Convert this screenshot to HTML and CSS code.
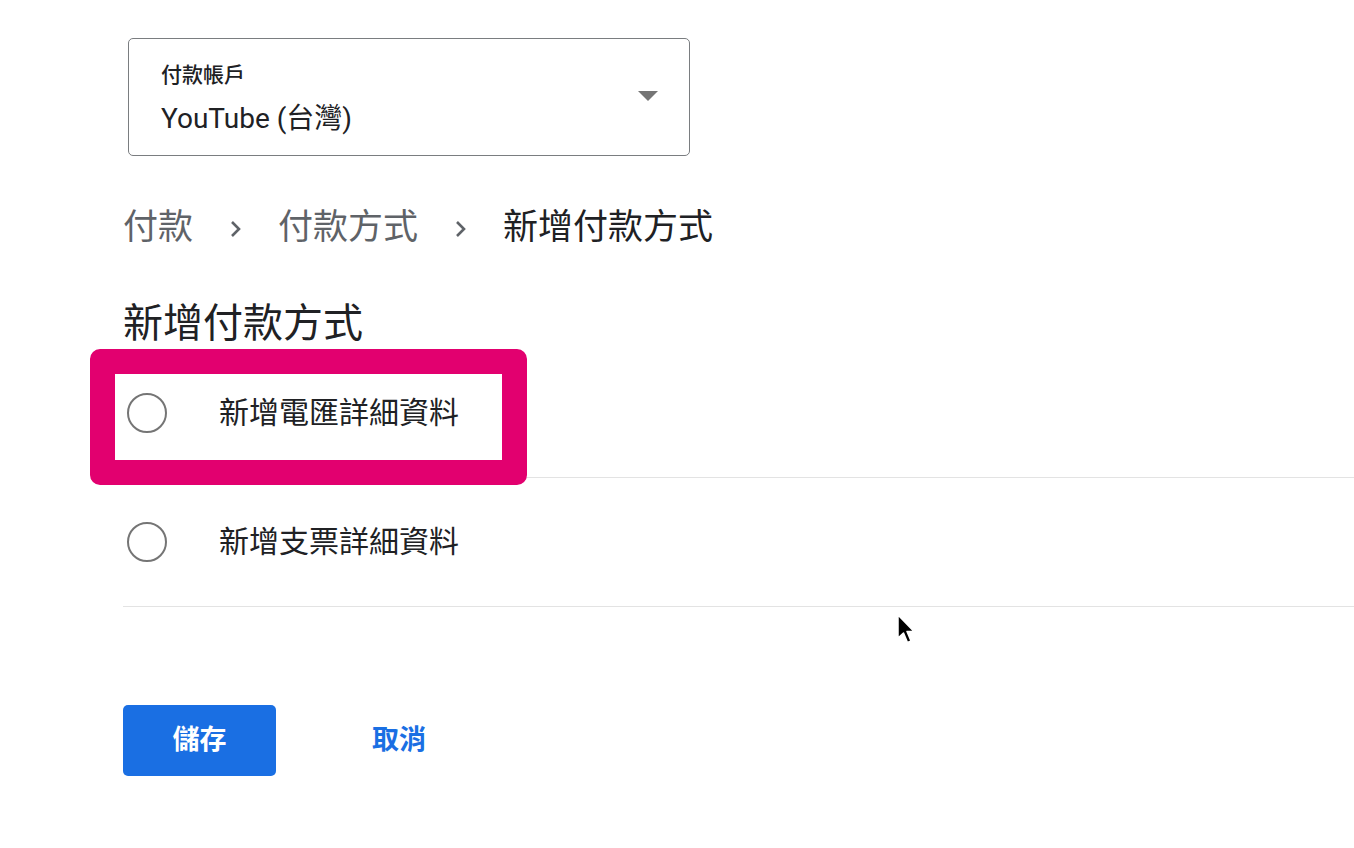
FILE: index.html
```html
<!DOCTYPE html>
<html lang="zh-Hant">
<head>
<meta charset="utf-8">
<title>新增付款方式</title>
<link rel="stylesheet" href="styles.css">
</head>
<body>
<main class="page">
  <div class="select">
    <div class="select-text">
      <div class="select-label">付款帳戶</div>
      <div class="select-value">YouTube (台灣)</div>
    </div>
    <svg class="select-arrow" width="20" height="10" viewBox="0 0 20 10"><path d="M0 0 L20 0 L10 10 Z" fill="#757575"/></svg>
  </div>

  <nav class="crumbs">
    <span class="crumb">付款</span>
    <svg class="chev" width="14" height="18" viewBox="0 0 14 18"><path d="M3 2 L10 9 L3 16" fill="none" stroke="#5f6368" stroke-width="2.6"/></svg>
    <span class="crumb">付款方式</span>
    <svg class="chev" width="14" height="18" viewBox="0 0 14 18"><path d="M3 2 L10 9 L3 16" fill="none" stroke="#5f6368" stroke-width="2.6"/></svg>
    <span class="crumb current">新增付款方式</span>
  </nav>

  <h1 class="title">新增付款方式</h1>

  <div class="options">
    <label class="option">
      <span class="radio"></span>
      <span class="option-text">新增電匯詳細資料</span>
      <span class="highlight"></span>
    </label>
    <label class="option">
      <span class="radio"></span>
      <span class="option-text">新增支票詳細資料</span>
    </label>
  </div>

  <div class="actions">
    <button class="btn-primary">儲存</button>
    <button class="btn-text">取消</button>
  </div>
</main>
<svg class="cursor" width="22" height="32" viewBox="0 0 22 32"><path d="M1 1 L1 24 L6.5 19 L10.5 28.5 L14 27 L10 17.5 L17 17.5 Z" fill="#000" stroke="#fff" stroke-width="1.5" stroke-linejoin="round"/></svg>
</body>
</html>
```

FILE: styles.css
```css
* { box-sizing: border-box; }
html, body {
  margin: 0;
  padding: 0;
  background: #fff;
}
body {
  font-family: Roboto, "Noto Sans CJK TC", "Noto Sans", sans-serif;
  color: #202124;
  position: relative;
  width: 1354px;
  height: 848px;
  overflow: hidden;
}
.page {
  padding: 38px 0 0 123px;
}
.select {
  margin-left: 5px;
  width: 562px;
  height: 118px;
  border: 1.5px solid #7a7d80;
  border-radius: 5px;
  display: flex;
  align-items: center;
  justify-content: space-between;
  padding: 0 31px 0 32px;
}
.select-text {
  display: flex;
  flex-direction: column;
  margin-top: 4px;
}
.select-label {
  font-size: 21px;
  line-height: 26px;
  font-weight: 500;
  color: #202124;
}
.select-value {
  font-size: 28px;
  line-height: 34px;
  margin-top: 14px;
  color: #202124;
}
.select-arrow {
  margin-top: -3px;
}
.crumbs {
  margin-top: 48px;
  display: flex;
  align-items: center;
  height: 48px;
  font-size: 35px;
  line-height: 48px;
}
.crumb { color: #5f6368; }
.crumb.current { color: #202124; }
.chev {
  margin: 2px 35px 0 36px;
}
.title {
  margin: 48px 0 0;
  font-size: 40px;
  line-height: 48px;
  font-weight: 400;
  color: #202124;
}
.options {
  display: flex;
  flex-direction: column;
}
.option {
  position: relative;
  height: 129px;
  display: flex;
  align-items: center;
  border-bottom: 1.5px solid #e3e3e3;
  padding-left: 4px;
}
.option:first-child { height: 130px; }
.radio {
  width: 40px;
  height: 40px;
  border: 2.8px solid #757575;
  border-radius: 50%;
  flex: none;
}
.option-text {
  margin-left: 52px;
  font-size: 30px;
  line-height: 40px;
  color: #202124;
}
.highlight {
  position: absolute;
  left: -33px;
  top: 1px;
  width: 437px;
  height: 136px;
  border: 25px solid #e2006f;
  border-radius: 10px;
  pointer-events: none;
}
.actions {
  margin-top: 98px;
  display: flex;
  align-items: center;
}
.btn-primary {
  width: 153px;
  height: 71px;
  border: none;
  border-radius: 5px;
  background: #1a6fe3;
  color: #fff;
  font-family: inherit;
  font-size: 27px;
  font-weight: 700;
  line-height: 1;
  padding: 0 0 1px;
}
.btn-text {
  margin-left: 96px;
  background: none;
  border: none;
  padding: 0 0 1px;
  color: #1a6fe3;
  font-family: inherit;
  font-size: 27px;
  font-weight: 700;
  line-height: 1;
}
.cursor {
  position: absolute;
  left: 897px;
  top: 614px;
}
```
